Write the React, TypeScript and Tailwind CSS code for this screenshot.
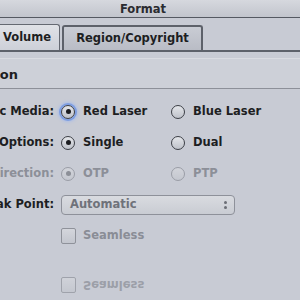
import React from "react";

const font = { fontFamily: '"DejaVu Sans", "Liberation Sans", sans-serif' };

function Radio({ on, focus, disabled }: { on?: boolean; focus?: boolean; disabled?: boolean }) {
  return (
    <div
      className={
        "relative flex h-[14px] w-[14px] shrink-0 items-center justify-center rounded-full border bg-gradient-to-b " +
        (disabled
          ? "border-[#9a9da6] from-[#d2d4da] to-[#c4c7cf]"
          : "border-[#3c3f46] from-[#e4e6ea] to-[#bfc2ca]") +
        (focus ? " shadow-[0_0_0_2px_#7f9ee0,0_0_3px_3px_#a9bde8]" : "")
      }
    >
      {on && (
        <div className={"h-[5px] w-[5px] rounded-full " + (disabled ? "bg-[#8c8f97]" : "bg-[#1b1c20]")} />
      )}
    </div>
  );
}

function Row({
  label,
  disabled,
  children,
}: {
  label: string;
  disabled?: boolean;
  children: React.ReactNode;
}) {
  return (
    <div className="flex h-[31px] items-center">
      <div className="flex w-[54px] shrink-0 justify-end overflow-hidden">
        <span className={"whitespace-nowrap " + (disabled ? "text-[#8c8f98]" : "text-[#1d1e22]")}>{label}</span>
      </div>
      <div className="ml-[7px] flex items-center">{children}</div>
    </div>
  );
}

function Choice({
  text,
  on,
  focus,
  disabled,
  w,
}: {
  text: string;
  on?: boolean;
  focus?: boolean;
  disabled?: boolean;
  w: string;
}) {
  return (
    <div className={"flex shrink-0 items-center gap-[8px] " + w}>
      <Radio on={on} focus={focus} disabled={disabled} />
      <span className={"whitespace-nowrap " + (disabled ? "text-[#8c8f98]" : "text-[#1d1e22]")}>{text}</span>
    </div>
  );
}

function Checkbox() {
  return (
    <div className="h-[16px] w-[15px] shrink-0 rounded-[2px] border border-[#8f929a] bg-gradient-to-b from-[#d4d6dc] to-[#c3c6ce]" />
  );
}

export default function App() {
  return (
    <div
      className="h-[300px] w-[300px] overflow-hidden bg-[#c8cbd4] text-[11.5px] font-bold text-[#1d1e22]"
      style={font}
    >
      {/* title bar */}
      <div className="flex h-[18px] items-center justify-center border-b border-[#555962] bg-gradient-to-b from-[#d6d8de] to-[#c2c5cd] pr-[14px] pt-[2px] text-[#2a2b30]">
        Format
      </div>

      {/* tabs */}
      <div className="mt-[8px] flex h-[26px] items-end border-b-2 border-[#5d616a]">
        <div className="-ml-[8px] flex h-[26px] w-[68px] items-center justify-center rounded-t-[3px] border-x border-t border-[#656972] bg-gradient-to-b from-[#e0e2e7] to-[#cdd0d8] pl-[2px]">
          Volume
        </div>
        <div className="ml-[2px] flex h-[25px] w-[141px] items-center justify-center rounded-t-[3px] border-x-2 border-t-2 border-[#5d616a] bg-gradient-to-b from-[#c9ccd4] to-[#b9bcc5] pt-[1px]">
          Region/Copyright
        </div>
      </div>

      {/* section header */}
      <div className="mt-[6px] flex h-[31px] items-center overflow-hidden border-y border-t-[#d9dbe1] border-b-[#8d9099] bg-[#cdd0d8] pt-[3px] text-[13px]">
        <div className="flex w-[18px] shrink-0 justify-end">
          <span className="whitespace-nowrap">Configuration</span>
        </div>
      </div>

      <div className="mt-[7px] flex flex-col">
        <Row label="Disc Media:">
          <Choice text="Red Laser" on focus w="w-[110px]" />
          <Choice text="Blue Laser" w="w-[100px]" />
        </Row>
        <Row label="Layer Options:">
          <Choice text="Single" on w="w-[110px]" />
          <Choice text="Dual" w="w-[100px]" />
        </Row>
        <Row label="Direction:" disabled>
          <Choice text="OTP" on disabled w="w-[110px]" />
          <Choice text="PTP" disabled w="w-[100px]" />
        </Row>
        <Row label="Break Point:">
          <div className="flex h-[20px] w-[174px] items-center justify-between rounded-[4px] border border-[#8e919a] bg-gradient-to-b from-[#d9dbe0] to-[#c9ccd3] pl-[8px] pr-[7px] font-semibold text-[#6f727a]">
            <span>Automatic</span>
            <div className="flex flex-col gap-[2px]">
              <div className="h-[3px] w-[3px] rounded-full bg-[#6b6e76]" />
              <div className="h-[3px] w-[3px] rounded-full bg-[#6b6e76]" />
            </div>
          </div>
        </Row>
        <div className="flex h-[31px] items-center pl-[61px]">
          <Checkbox />
          <span className="ml-[7px] text-[#8a8d96]">Seamless</span>
        </div>
        {/* reflection */}
        <div className="mt-[24px] flex h-[20px] items-center pl-[61px] opacity-70">
          <Checkbox />
          <span className="ml-[7px] inline-block -scale-y-100 text-[#8a8d96]">Seamless</span>
        </div>
      </div>
    </div>
  );
}
